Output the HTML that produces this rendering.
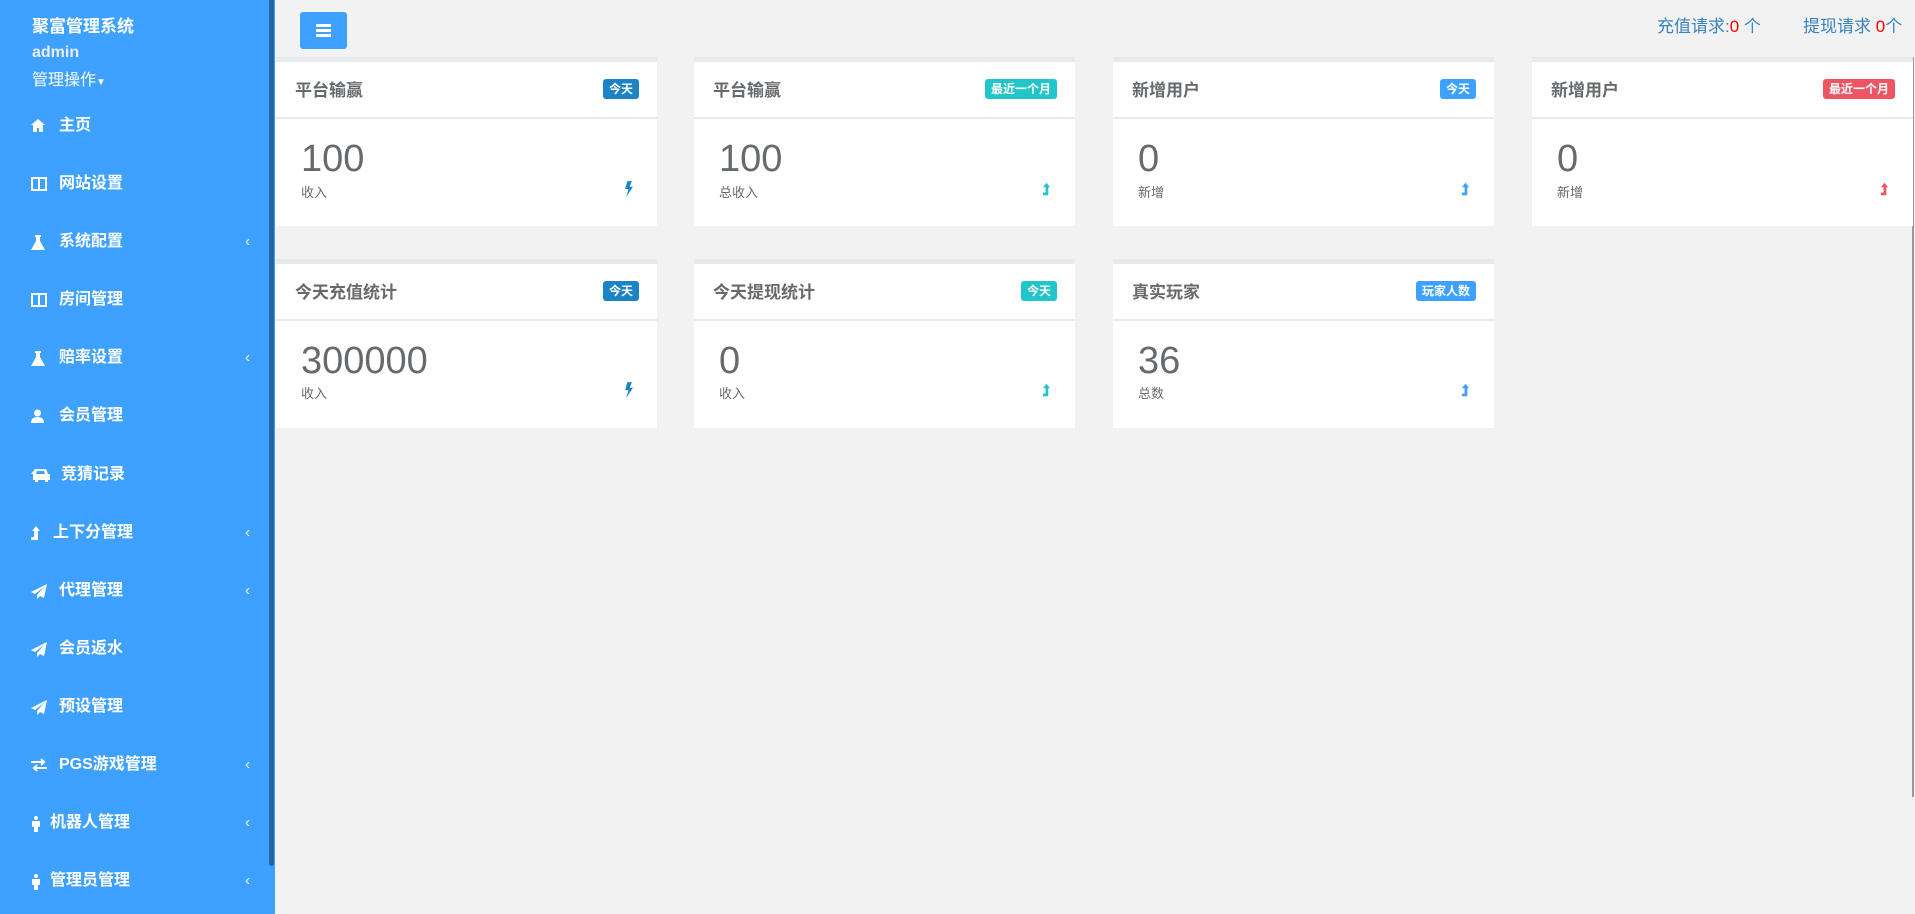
<!DOCTYPE html>
<html><head><meta charset="utf-8"><style>
*{margin:0;padding:0;box-sizing:border-box}
body{width:1915px;height:914px;overflow:hidden;background:#f2f2f2;font-family:"Liberation Sans","Noto Sans CJK SC",sans-serif;position:relative}
.sb{position:absolute;left:0;top:0;width:275px;height:914px;background:#3fa1ff;color:#fff}
.scr{position:absolute;left:269px;top:0;width:5px;height:866px;background:#2266a8;border-radius:0 0 3px 3px}
.t1{position:absolute;left:32px;top:12px;font-size:17px;font-weight:bold}
.t2{position:absolute;left:32px;top:44px;font-size:16px;font-weight:bold;color:#e6eef8}
.t3{position:absolute;left:32px;top:66px;font-size:16px}
.mi{position:absolute;left:31px;font-size:16px;font-weight:bold;height:24px;line-height:24px;width:225px}
.mi svg{position:absolute;left:0;top:5px}
.mi span{position:absolute;left:28px}
.mi i{position:absolute;right:6px;font-style:normal;font-weight:normal;font-size:15px}
.btn{position:absolute;left:300px;top:12px;width:47px;height:37px;background:#3fa1ff;border-radius:3px}
.btn b{position:absolute;left:16px;width:15px;height:3px;background:#fff}
.top{position:absolute;top:12px;font-size:17px;color:#3b83c0}
.top em{color:#f00;font-style:normal}
.card{position:absolute;width:381px;height:169px;background:#fff;border-top:5px solid #e7eaec}
.card .h{height:57px;border-bottom:2px solid #e7eaec;position:relative}
.card .h .tt{position:absolute;left:19px;top:14px;font-size:17px;font-weight:bold;color:#676a6c}
.badge{position:absolute;right:18px;top:17px;height:20px;line-height:20px;padding:0 6px;font-size:12px;font-weight:bold;color:#fff;border-radius:3px}
.num{position:absolute;left:25px;top:76px;font-size:38px;color:#676a6c}
.lb{position:absolute;left:25px;top:120px;font-size:13px;color:#676a6c}
.ic{position:absolute;right:24px;top:119px}
.rl{position:absolute;left:1912px;top:57px;width:2px;height:740px;background:#999}
</style></head><body>
<div class="sb">
<div class="t1">聚富管理系统</div>
<div class="t2">admin</div>
<div class="t3">管理操作<span style="font-size:10px">▼</span></div>
<div class="mi" style="top:114px"><svg width="14" height="13" viewBox="0 0 14 13"><path d="M7 0L0 6h2v7h4V9h2v4h4V6h2z" fill="#fff"/></svg><span>主页</span></div>
<div class="mi" style="top:172px"><svg width="16" height="14" viewBox="0 0 16 14"><rect x="1" y="1" width="14" height="12" fill="none" stroke="#fff" stroke-width="2"/><path d="M8 1v12" stroke="#fff" stroke-width="2"/></svg><span>网站设置</span></div>
<div class="mi" style="top:230px"><svg width="14" height="15" viewBox="0 0 14 15"><path d="M4 0h6v2H9v4l5 9H0l5-9V2H4z" fill="#fff"/></svg><span>系统配置</span><i>‹</i></div>
<div class="mi" style="top:288px"><svg width="16" height="14" viewBox="0 0 16 14"><rect x="1" y="1" width="14" height="12" fill="none" stroke="#fff" stroke-width="2"/><path d="M8 1v12" stroke="#fff" stroke-width="2"/></svg><span>房间管理</span></div>
<div class="mi" style="top:346px"><svg width="14" height="15" viewBox="0 0 14 15"><path d="M4 0h6v2H9v4l5 9H0l5-9V2H4z" fill="#fff"/></svg><span>赔率设置</span><i>‹</i></div>
<div class="mi" style="top:404px"><svg width="13" height="14" viewBox="0 0 13 14"><circle cx="6.5" cy="4" r="3.5" fill="#fff"/><path d="M0 14q0-6 6.5-6t6.5 6z" fill="#fff"/></svg><span>会员管理</span></div>
<div class="mi" style="top:463px"><svg width="19" height="14" viewBox="0 0 19 14"><path d="M4 1h11l2 5h2v6h-2v2h-3v-2H7v2H4v-2H2V6H0 M2 6h2L5 2h9l1 4" fill="#fff"/><path d="M5 6l1-3h7l1 3z" fill="#3fa1ff"/></svg><span style="left:30px">竞猜记录</span></div>
<div class="mi" style="top:521px"><svg width="10" height="14" viewBox="0 0 10 14"><path d="M5 0l4 5H7v9H0v-3h3V5H1z" fill="#fff"/></svg><span style="left:22px">上下分管理</span><i>‹</i></div>
<div class="mi" style="top:579px"><svg width="16" height="15" viewBox="0 0 16 15"><path d="M16 0L0 8l4 2 9-7-7 8v4l3-3 4 2z" fill="#fff"/></svg><span>代理管理</span><i>‹</i></div>
<div class="mi" style="top:637px"><svg width="16" height="15" viewBox="0 0 16 15"><path d="M16 0L0 8l4 2 9-7-7 8v4l3-3 4 2z" fill="#fff"/></svg><span>会员返水</span></div>
<div class="mi" style="top:695px"><svg width="16" height="15" viewBox="0 0 16 15"><path d="M16 0L0 8l4 2 9-7-7 8v4l3-3 4 2z" fill="#fff"/></svg><span>预设管理</span></div>
<div class="mi" style="top:753px"><svg width="16" height="14" viewBox="0 0 16 14"><path d="M0 4h13M10 1l3 3-3 3M16 10H3M6 7l-3 3 3 3" fill="none" stroke="#fff" stroke-width="2"/></svg><span>PGS游戏管理</span><i>‹</i></div>
<div class="mi" style="top:811px"><svg width="10" height="16" viewBox="0 0 10 16"><circle cx="5" cy="2" r="2" fill="#fff"/><path d="M1 5h8v6H7v5H3v-5H1z" fill="#fff"/></svg><span style="left:19px">机器人管理</span><i>‹</i></div>
<div class="mi" style="top:869px"><svg width="10" height="16" viewBox="0 0 10 16"><circle cx="5" cy="2" r="2" fill="#fff"/><path d="M1 5h8v6H7v5H3v-5H1z" fill="#fff"/></svg><span style="left:19px">管理员管理</span><i>‹</i></div>
<div class="scr"></div>
</div>
<div class="btn"><b style="top:12px"></b><b style="top:17px"></b><b style="top:22px"></b></div>
<div class="top" style="left:1657px">充值请求:<em>0</em> 个</div>
<div class="top" style="left:1803px">提现请求 <em>0</em>个</div>
<div class="rl"></div>

<div class="card" style="left:276px;top:57px"><div class="h"><div class="tt">平台输赢</div><div class="badge" style="background:#1c84c6">今天</div></div><div class="num">100</div><div class="lb">收入</div><svg class="ic" width="9" height="16" viewBox="0 0 8 14"><path d="M3 0h4L5 5h3L2 14l2-7H1z" fill="#1c84c6"/></svg></div>
<div class="card" style="left:694px;top:57px"><div class="h"><div class="tt">平台输赢</div><div class="badge" style="background:#23c6c8">最近一个月</div></div><div class="num">100</div><div class="lb">总收入</div><svg class="ic" width="9" height="16" viewBox="0 0 10 14"><path d="M5 0l4 5H7v9H1v-3h3V5H1z" fill="#23c6c8"/></svg></div>
<div class="card" style="left:1113px;top:57px"><div class="h"><div class="tt">新增用户</div><div class="badge" style="background:#3fa1ff">今天</div></div><div class="num">0</div><div class="lb">新增</div><svg class="ic" width="9" height="16" viewBox="0 0 10 14"><path d="M5 0l4 5H7v9H1v-3h3V5H1z" fill="#3fa1ff"/></svg></div>
<div class="card" style="left:1532px;top:57px"><div class="h"><div class="tt">新增用户</div><div class="badge" style="background:#ed5565">最近一个月</div></div><div class="num">0</div><div class="lb">新增</div><svg class="ic" width="9" height="16" viewBox="0 0 10 14"><path d="M5 0l4 5H7v9H1v-3h3V5H1z" fill="#ed5565"/></svg></div>

<div class="card" style="left:276px;top:259px"><div class="h"><div class="tt">今天充值统计</div><div class="badge" style="background:#1c84c6">今天</div></div><div class="num">300000</div><div class="lb" style="top:119px">收入</div><svg class="ic" style="top:118px" width="9" height="16" viewBox="0 0 8 14"><path d="M3 0h4L5 5h3L2 14l2-7H1z" fill="#1c84c6"/></svg></div>
<div class="card" style="left:694px;top:259px"><div class="h"><div class="tt">今天提现统计</div><div class="badge" style="background:#23c6c8">今天</div></div><div class="num">0</div><div class="lb" style="top:119px">收入</div><svg class="ic" style="top:118px" width="9" height="16" viewBox="0 0 10 14"><path d="M5 0l4 5H7v9H1v-3h3V5H1z" fill="#23c6c8"/></svg></div>
<div class="card" style="left:1113px;top:259px"><div class="h"><div class="tt">真实玩家</div><div class="badge" style="background:#3fa1ff">玩家人数</div></div><div class="num">36</div><div class="lb" style="top:119px">总数</div><svg class="ic" style="top:118px" width="9" height="16" viewBox="0 0 10 14"><path d="M5 0l4 5H7v9H1v-3h3V5H1z" fill="#3fa1ff"/></svg></div>
</body></html>
